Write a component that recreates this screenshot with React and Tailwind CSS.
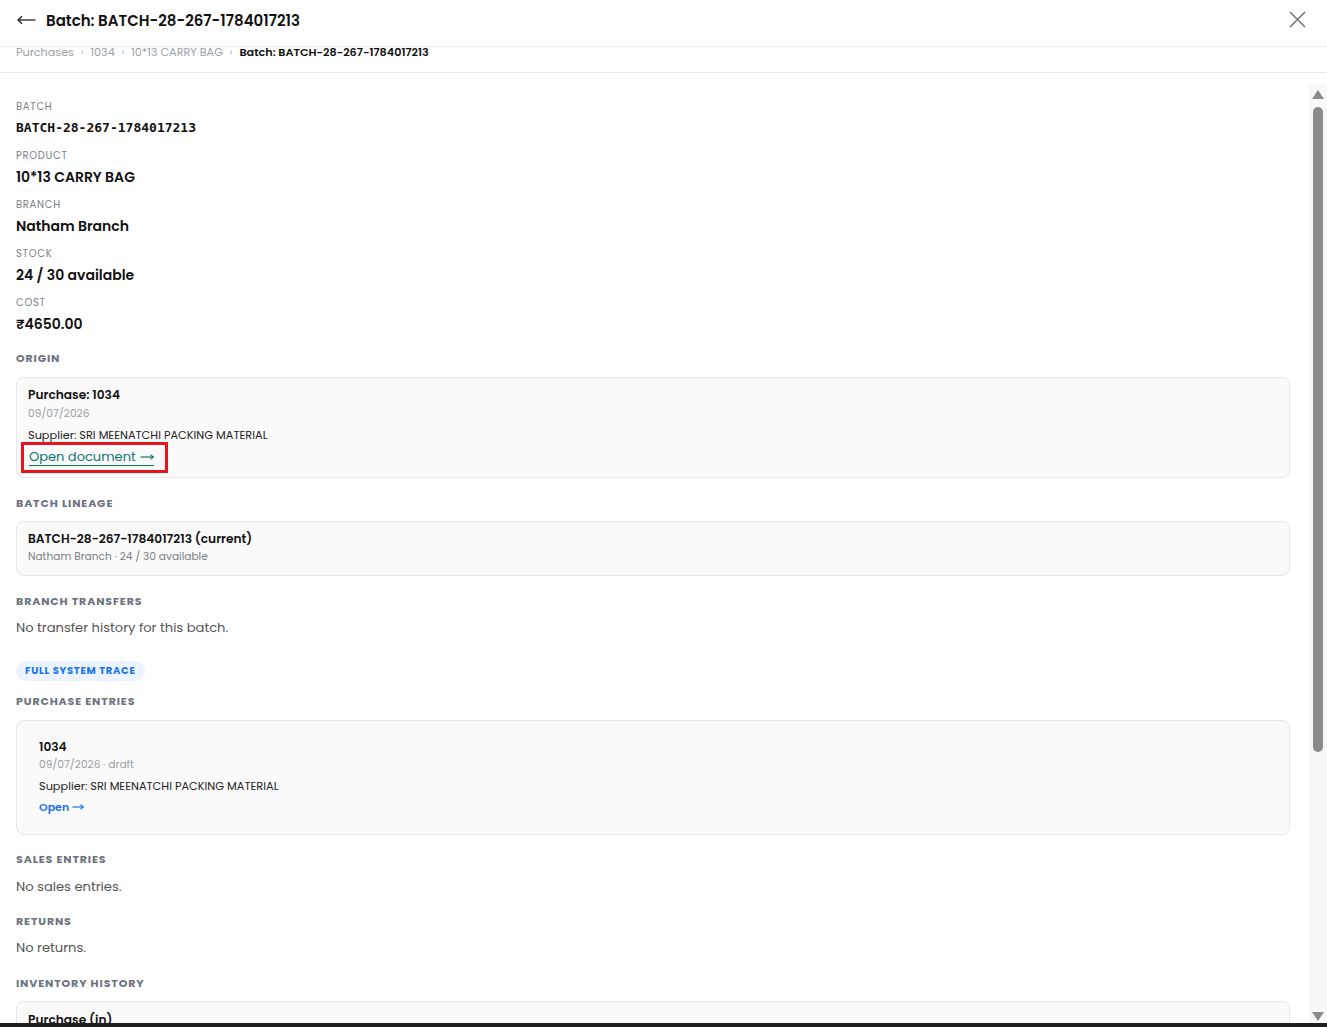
import React from 'react';

const sans = "font-['Poppins','Inter','Noto_Sans',sans-serif]";

const fields = [
  { label: 'Batch', value: 'BATCH-28-267-1784017213', mono: true },
  { label: 'Product', value: '10*13 CARRY BAG' },
  { label: 'Branch', value: 'Natham Branch' },
  { label: 'Stock', value: '24 / 30 available' },
  { label: 'Cost', value: '₹4650.00' },
];

const SectionTitle = ({ children }) => (
  <h3 className="text-[11px] leading-[14px] font-bold uppercase tracking-[0.08em] text-[#6b7280]">
    {children}
  </h3>
);

const Card = ({ className = '', children }) => (
  <div className={`rounded-lg border border-[#e5e7eb] bg-[#fafafa] ${className}`}>{children}</div>
);

const Crumb = () => <span className="mx-[7px] text-[9px]">›</span>;

// thin "long" arrow used after link labels
const LinkArrow = ({ width = 14, color }) => (
  <svg width={width} height="8" viewBox={`0 0 ${width} 8`} fill="none" stroke={color} strokeWidth="1.2">
    <path d={`M0.5 4 H${width - 0.6}`} />
    <path d={`M${width - 3.6} 1.6 L${width - 0.6} 4 L${width - 3.6} 6.4`} />
  </svg>
);

const Scrollbar = () => (
  <div className="w-[18px] shrink-0 bg-[#f8f8f8] flex flex-col items-center pt-[6px] pb-[2px]">
    <svg width="12" height="9" viewBox="0 0 12 9">
      <path d="M6 0 L12 9 L0 9 Z" fill="#8a8a8a" />
    </svg>
    <div className="mt-[8px] w-[10px] h-[645px] rounded-full bg-[#8a8a8a]" />
    <div className="flex-1" />
    <svg width="12" height="9" viewBox="0 0 12 9">
      <path d="M0 0 L12 0 L6 9 Z" fill="#8a8a8a" />
    </svg>
  </div>
);

export default function App() {
  return (
    <div className={`h-[1027px] flex flex-col bg-white text-[#111] overflow-hidden ${sans}`}>
      {/* header */}
      <div className="h-[47px] shrink-0 flex items-center justify-between pl-[17px] pr-[21px] border-b border-[#ececec]">
        <div className="flex items-center gap-[10px] -mt-[6px]">
          <svg width="19" height="10" viewBox="0 0 19 10" fill="none" stroke="#222" strokeWidth="1.3">
            <path d="M18.5 5 H1" />
            <path d="M5 1.2 L1 5 L5 8.8" />
          </svg>
          <h1 className="text-[15px] font-semibold leading-none">Batch: BATCH-28-267-1784017213</h1>
        </div>
        <svg width="17" height="17" viewBox="0 0 17 17" className="-mt-[7px]" stroke="#777" strokeWidth="1.6">
          <path d="M1 1 L16 16 M16 1 L1 16" />
        </svg>
      </div>

      {/* breadcrumb */}
      <div className="h-[26px] shrink-0 flex items-start px-4 border-b border-[#ececec] text-[11.2px] leading-[10px] text-[#9aa0a6]">
        <span>Purchases</span>
        <Crumb />
        <span>1034</span>
        <Crumb />
        <span>10*13 CARRY BAG</span>
        <Crumb />
        <span className="font-semibold text-[#111]">Batch: BATCH-28-267-1784017213</span>
      </div>

      <div className="flex-1 min-h-0 flex pt-[11px]">
        <div className="flex-1 min-w-0 overflow-hidden pl-4 pr-[19px] pt-[17px]">
          {/* summary fields */}
          <div className="flex flex-col gap-[13px]">
            {fields.map((f) => (
              <div key={f.label} className="flex flex-col gap-[6px]">
                <span className="text-[10px] leading-[12px] uppercase tracking-[0.07em] text-[#7b8088]">{f.label}</span>
                <span
                  className={
                    f.mono
                      ? "font-['DejaVu_Sans_Mono',monospace] text-[13px] leading-[18px] font-semibold"
                      : 'text-[14px] leading-[18px] font-semibold'
                  }
                >
                  {f.value}
                </span>
              </div>
            ))}
          </div>

          {/* origin */}
          <div className="mt-[18px]">
            <SectionTitle>Origin</SectionTitle>
            <Card className="mt-[12px] px-[11px] pt-[8px] pb-[4px]">
              <div className="text-[12.2px] leading-[18px] font-semibold">Purchase: 1034</div>
              <div className="text-[10.6px] leading-[16px] text-[#9aa0a6] mt-[2px]">09/07/2026</div>
              <div className="text-[11.3px] leading-[16px] text-[#222] mt-[5px]">Supplier: SRI MEENATCHI PACKING MATERIAL</div>
              <div className="-mt-[1px] -ml-[7px] inline-flex border-[3px] border-[#e8141c] pl-[5px] pr-[11px] py-[4px]">
                <a className="inline-flex items-center gap-[4px] border-b border-[#0f766e] text-[13px] leading-[16px] text-[#0f766e]">
                  Open document
                  <LinkArrow width={14} color="#0f766e" />
                </a>
              </div>
            </Card>
          </div>

          {/* lineage */}
          <div className="mt-[18px]">
            <SectionTitle>Batch lineage</SectionTitle>
            <Card className="mt-[11px] px-[11px] pt-[8px] pb-[10px]">
              <div className="text-[12.2px] leading-[18px] font-semibold">BATCH-28-267-1784017213 (current)</div>
              <div className="text-[10.6px] leading-[16px] text-[#7b8088] mt-[1px]">Natham Branch · 24 / 30 available</div>
            </Card>
          </div>

          {/* transfers */}
          <div className="mt-[18px]">
            <SectionTitle>Branch transfers</SectionTitle>
            <p className="mt-[11px] text-[13.1px] leading-[18px] text-[#555]">No transfer history for this batch.</p>
          </div>

          <div className="mt-[20px]">
            <span className="inline-flex items-center h-[20px] px-[9px] rounded-full bg-[#eaf3ff] text-[10px] font-bold tracking-[0.07em] text-[#1a73e8]">
              FULL SYSTEM TRACE
            </span>
          </div>

          {/* purchases */}
          <div className="mt-[13px]">
            <SectionTitle>Purchase entries</SectionTitle>
            <Card className="mt-[12px] px-[22px] pt-[17px] pb-[19px]">
              <div className="text-[12.2px] leading-[18px] font-semibold">1034</div>
              <div className="text-[10.6px] leading-[16px] text-[#9aa0a6] mt-[1px]">09/07/2026 · draft</div>
              <div className="text-[11.3px] leading-[16px] text-[#222] mt-[5px]">Supplier: SRI MEENATCHI PACKING MATERIAL</div>
              <a className="mt-[5px] flex items-center gap-[3px] text-[11px] leading-[16px] font-semibold text-[#1a73e8]">
                Open
                <LinkArrow width={12} color="#1a73e8" />
              </a>
            </Card>
          </div>

          <div className="mt-[17px]">
            <SectionTitle>Sales entries</SectionTitle>
            <p className="mt-[12px] text-[13.1px] leading-[18px] text-[#555]">No sales entries.</p>
          </div>

          <div className="mt-[18px]">
            <SectionTitle>Returns</SectionTitle>
            <p className="mt-[11px] text-[13.1px] leading-[18px] text-[#555]">No returns.</p>
          </div>

          <div className="mt-[19px]">
            <SectionTitle>Inventory history</SectionTitle>
            <Card className="mt-[11px] px-[11px] pt-[9px] pb-[9px]">
              <div className="text-[12.2px] leading-[18px] font-semibold">Purchase (in)</div>
              <div className="text-[10.6px] leading-[16px] text-[#9aa0a6] mt-[2px]">09/07/2026 · +30</div>
            </Card>
          </div>
        </div>
        <Scrollbar />
      </div>

      <div className="h-[4px] shrink-0 bg-[#1f1f1f]" />
    </div>
  );
}
